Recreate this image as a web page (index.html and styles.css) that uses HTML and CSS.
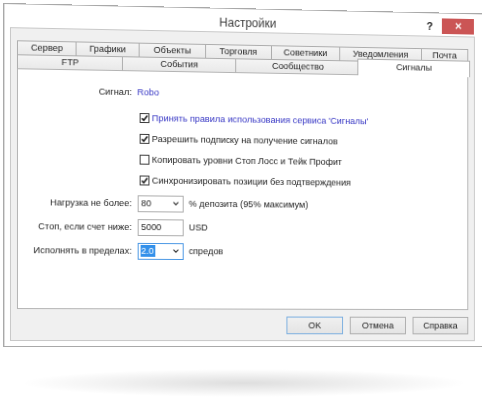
FILE: index.html
```html
<!DOCTYPE html>
<html lang="ru">
<head>
<meta charset="utf-8">
<title>Настройки</title>
<link rel="stylesheet" href="styles.css">
</head>
<body>
<div class="stage">
  <div class="dialog">
    <div class="caption">
      <div class="title">Настройки</div>
      <div class="tools">
        <span class="help">?</span>
        <span class="close"><svg width="7" height="7" viewBox="0 0 7 7"><path d="M0.8 0.8L6.2 6.2M6.2 0.8L0.8 6.2" stroke="#fff" stroke-width="1.3" fill="none"/></svg></span>
      </div>
    </div>
    <div class="client">
      <div class="tabs">
        <div class="tabrow back">
          <div class="tab">Сервер</div>
          <div class="tab">Графики</div>
          <div class="tab">Объекты</div>
          <div class="tab">Торговля</div>
          <div class="tab">Советники</div>
          <div class="tab">Уведомления</div>
          <div class="tab">Почта</div>
        </div>
        <div class="tabrow front">
          <div class="tab">FTP</div>
          <div class="tab">События</div>
          <div class="tab">Сообщество</div>
          <div class="tab selected">Сигналы</div>
        </div>
      </div>
      <div class="panel">
        <div class="row signal">
          <span class="label">Сигнал:</span>
          <span class="link">Robo</span>
        </div>
        <div class="row check first">
          <span class="cb"><span class="box"><svg width="8" height="8" viewBox="0 0 8 8"><path d="M1.3 4.2L3.2 6.2L6.9 1.6" stroke="#1e1e1e" stroke-width="1.6" fill="none"/></svg></span><span class="link">Принять правила использования сервиса 'Сигналы'</span></span>
        </div>
        <div class="row check">
          <span class="cb"><span class="box"><svg width="8" height="8" viewBox="0 0 8 8"><path d="M1.3 4.2L3.2 6.2L6.9 1.6" stroke="#1e1e1e" stroke-width="1.6" fill="none"/></svg></span><span>Разрешить подписку на получение сигналов</span></span>
        </div>
        <div class="row check">
          <span class="cb"><span class="box"></span><span>Копировать уровни Стоп Лосс и Тейк Профит</span></span>
        </div>
        <div class="row check">
          <span class="cb"><span class="box"><svg width="8" height="8" viewBox="0 0 8 8"><path d="M1.3 4.2L3.2 6.2L6.9 1.6" stroke="#1e1e1e" stroke-width="1.6" fill="none"/></svg></span><span>Синхронизировать позиции без подтверждения</span></span>
        </div>
        <div class="row field first">
          <span class="label">Нагрузка не более:</span>
          <span class="fieldcell"><span class="combo"><span>80</span><svg width="6" height="4" viewBox="0 0 6 4"><path d="M0.5 0.6L3 3.1L5.5 0.6" stroke="#333" stroke-width="1.2" fill="none"/></svg></span><span>% депозита (95% максимум)</span></span>
        </div>
        <div class="row field">
          <span class="label">Стоп, если счет ниже:</span>
          <span class="fieldcell"><span class="combo"><span>5000</span></span><span>USD</span></span>
        </div>
        <div class="row field">
          <span class="label">Исполнять в пределах:</span>
          <span class="fieldcell"><span class="combo focus"><span class="sel">2.0</span><svg width="6" height="4" viewBox="0 0 6 4"><path d="M0.5 0.6L3 3.1L5.5 0.6" stroke="#333" stroke-width="1.2" fill="none"/></svg></span><span>спредов</span></span>
        </div>
      </div>
      <div class="buttons">
        <div class="btn default">OK</div>
        <div class="btn">Отмена</div>
        <div class="btn">Справка</div>
      </div>
    </div>
  </div>
  <div class="floor"></div>
</div>
</body>
</html>
```
FILE: styles.css
```css
html, body {
  margin: 0;
  padding: 0;
  overflow: hidden;
  background: #fff;
}
body {
  width: 482px;
  height: 401px;
  font-family: "Liberation Sans", Arial, sans-serif;
  font-size: 9.3px;
  color: #1b1b1b;
}
.stage {
  padding: 3px 0 0 3px;
}
.dialog {
  width: 506px;
  height: 344px;
  box-sizing: border-box;
  border: 1px solid #a9a9a9;
  box-shadow: inset 1px 0 0 #dcdcdc;
  background: #fff;
  padding: 0 18px 5px 6px;
  display: flex;
  flex-direction: column;
  transform-origin: 0 100%;
  transform: perspective(800px) rotateY(2.9deg);
}
.caption {
  height: 23px;
  flex: none;
  display: grid;
  grid-template-columns: 1fr auto 1fr;
  margin-right: -4px;
}
.title {
  grid-column: 2;
  padding-top: 7px;
  font-size: 12px;
  line-height: 14px;
  color: #3c3c3c;
}
.tools {
  grid-column: 3;
  justify-self: end;
  display: flex;
  align-items: flex-start;
  padding-top: 4.6px;
  margin-right: 5px;
}
.help {
  font-weight: bold;
  font-size: 11px;
  line-height: 12px;
  margin-top: 2.5px;
  margin-right: 9.5px;
  color: #222;
}
.close {
  width: 34px;
  height: 16px;
  background: #cb5555;
  display: flex;
  align-items: center;
  justify-content: center;
}
.client {
  flex: 1;
  border: 1px solid #c8c8c8;
  background: #f0f0f0;
  display: flex;
  flex-direction: column;
  padding: 12px 6px 0 6px;
}
.tabs {
  height: 28px;
  flex: none;
  display: flex;
  flex-direction: column;
}
.tabrow {
  display: grid;
  height: 14px;
}
.tabrow.back {
  grid-template-columns: 60fr 64fr 67.5fr 68fr 71fr 86fr 49fr;
}
.tabrow.front {
  grid-template-columns: 107fr 116fr 129fr 114fr;
}
.tab {
  background: linear-gradient(#f4f4f4, #e9e9e9);
  border: 1px solid #adadad;
  border-bottom: none;
  margin-left: -1px;
  display: flex;
  align-items: center;
  justify-content: center;
  line-height: 1;
  white-space: nowrap;
  color: #222;
}
.tab:first-child {
  margin-left: 0;
}
.tab.selected {
  background: #fff;
  margin: -2px -2px -1px -3px;
  position: relative;
  z-index: 1;
}
.panel {
  height: 241px;
  flex: none;
  box-sizing: border-box;
  border: 1px solid #b4b4b4;
  background: #fff;
  padding-top: 14px;
}
.row {
  display: grid;
  grid-template-columns: 115px 1fr;
  column-gap: 5.6px;
  align-items: center;
  white-space: nowrap;
}
.label {
  text-align: right;
}
.link {
  color: #3535c4;
}
.row.signal {
  height: 14px;
}
.row.check {
  height: 14px;
  margin-top: 7px;
}
.row.check.first {
  margin-top: 12px;
}
.row.field {
  height: 17px;
  margin-top: 7px;
}
.row.field.first {
  margin-top: 7.8px;
}
.cb {
  grid-column: 2;
  display: flex;
  align-items: center;
  gap: 3px;
  margin-left: 2px;
}
.box {
  width: 10px;
  height: 10px;
  box-sizing: border-box;
  border: 1px solid #3a3a3a;
  background: #fff;
  display: flex;
  align-items: center;
  justify-content: center;
}
.fieldcell {
  grid-column: 2;
  display: flex;
  align-items: center;
  gap: 5.6px;
}
.combo {
  width: 47px;
  height: 17px;
  box-sizing: border-box;
  border: 1px solid #acacac;
  background: #fff;
  display: flex;
  align-items: center;
  justify-content: space-between;
  padding: 0 4px 0 3px;
}
.combo.focus {
  border-color: #4a97e4;
}
.sel {
  background: #3390ea;
  color: #fff;
  padding: 1px 1px;
  margin-left: -1px;
}
.buttons {
  display: flex;
  justify-content: flex-end;
  gap: 7px;
  margin-top: 6.5px;
}
.btn {
  width: 59px;
  height: 18px;
  box-sizing: border-box;
  border: 1px solid #adadad;
  background: linear-gradient(#f0f0f0, #e4e4e4);
  display: flex;
  align-items: center;
  justify-content: center;
  color: #222;
}
.btn.default {
  border-color: #7aaee0;
}
.floor {
  margin: 22px 0 0 18px;
  width: 446px;
  height: 28px;
  background: radial-gradient(closest-side, rgba(0, 0, 0, 0.13), rgba(0, 0, 0, 0));
}
```
